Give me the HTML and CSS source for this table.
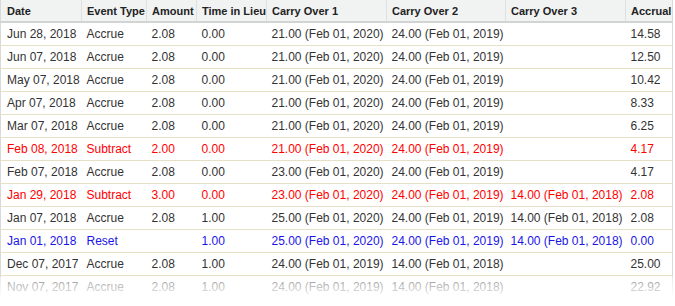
FILE: index.html
```html
<!DOCTYPE html>
<html lang="en">

<head>
    <meta charset="UTF-8">
    <meta name="viewport" content="width=device-width, initial-scale=1.0">
    <title>Leave History</title>
    <link rel="stylesheet" href="styles.css">
</head>

<body>
    <div class="grid-wrap">
        <table class="history">
            <colgroup>
                <col class="c-date">
                <col class="c-type">
                <col class="c-amount">
                <col class="c-lieu">
                <col class="c-carry">
                <col class="c-carry2">
                <col class="c-carry">
                <col>
            </colgroup>
            <thead>
                <tr>
                    <th>Date</th>
                    <th>Event Type</th>
                    <th>Amount</th>
                    <th>Time in Lieu</th>
                    <th>Carry Over 1</th>
                    <th>Carry Over 2</th>
                    <th>Carry Over 3</th>
                    <th>Accrual</th>
                </tr>
            </thead>
            <tbody>
                <tr>
                    <td>Jun 28, 2018</td><td>Accrue</td><td>2.08</td><td>0.00</td>
                    <td>21.00 (Feb 01, 2020)</td><td>24.00 (Feb 01, 2019)</td><td></td><td>14.58</td>
                </tr>
                <tr>
                    <td>Jun 07, 2018</td><td>Accrue</td><td>2.08</td><td>0.00</td>
                    <td>21.00 (Feb 01, 2020)</td><td>24.00 (Feb 01, 2019)</td><td></td><td>12.50</td>
                </tr>
                <tr>
                    <td>May 07, 2018</td><td>Accrue</td><td>2.08</td><td>0.00</td>
                    <td>21.00 (Feb 01, 2020)</td><td>24.00 (Feb 01, 2019)</td><td></td><td>10.42</td>
                </tr>
                <tr>
                    <td>Apr 07, 2018</td><td>Accrue</td><td>2.08</td><td>0.00</td>
                    <td>21.00 (Feb 01, 2020)</td><td>24.00 (Feb 01, 2019)</td><td></td><td>8.33</td>
                </tr>
                <tr>
                    <td>Mar 07, 2018</td><td>Accrue</td><td>2.08</td><td>0.00</td>
                    <td>21.00 (Feb 01, 2020)</td><td>24.00 (Feb 01, 2019)</td><td></td><td>6.25</td>
                </tr>
                <tr class="subtract">
                    <td>Feb 08, 2018</td><td>Subtract</td><td>2.00</td><td>0.00</td>
                    <td>21.00 (Feb 01, 2020)</td><td>24.00 (Feb 01, 2019)</td><td></td><td>4.17</td>
                </tr>
                <tr>
                    <td>Feb 07, 2018</td><td>Accrue</td><td>2.08</td><td>0.00</td>
                    <td>23.00 (Feb 01, 2020)</td><td>24.00 (Feb 01, 2019)</td><td></td><td>4.17</td>
                </tr>
                <tr class="subtract">
                    <td>Jan 29, 2018</td><td>Subtract</td><td>3.00</td><td>0.00</td>
                    <td>23.00 (Feb 01, 2020)</td><td>24.00 (Feb 01, 2019)</td><td>14.00 (Feb 01, 2018)</td><td>2.08</td>
                </tr>
                <tr>
                    <td>Jan 07, 2018</td><td>Accrue</td><td>2.08</td><td>1.00</td>
                    <td>25.00 (Feb 01, 2020)</td><td>24.00 (Feb 01, 2019)</td><td>14.00 (Feb 01, 2018)</td><td>2.08</td>
                </tr>
                <tr class="reset">
                    <td>Jan 01, 2018</td><td>Reset</td><td></td><td>1.00</td>
                    <td>25.00 (Feb 01, 2020)</td><td>24.00 (Feb 01, 2019)</td><td>14.00 (Feb 01, 2018)</td><td>0.00</td>
                </tr>
                <tr>
                    <td>Dec 07, 2017</td><td>Accrue</td><td>2.08</td><td>1.00</td>
                    <td>24.00 (Feb 01, 2019)</td><td>14.00 (Feb 01, 2018)</td><td></td><td>25.00</td>
                </tr>
                <tr>
                    <td>Nov 07, 2017</td><td>Accrue</td><td>2.08</td><td>1.00</td>
                    <td>24.00 (Feb 01, 2019)</td><td>14.00 (Feb 01, 2018)</td><td></td><td>22.92</td>
                </tr>
            </tbody>
        </table>
    </div>
</body>

</html>
```

FILE: styles.css
```css
body {
    margin: 0;
    padding: 0;
    font-family: 'Liberation Sans', Arial, sans-serif;
    background-color: #fff;
    overflow: hidden;
}

.grid-wrap {
    position: relative;
    width: 673px;
    height: 306px;
    overflow: hidden;
}

/* fade-out over the last visible row */
.grid-wrap::after {
    content: "";
    position: absolute;
    left: 0;
    right: 0;
    bottom: 0;
    height: 29px;
    background: linear-gradient(rgba(255, 255, 255, 0.45), rgba(255, 255, 255, 0.95) 70%, #fff);
}

.history {
    width: 673px;
    border-collapse: collapse;
    table-layout: fixed;
    border-left: 1px solid #d9d9d9;
    border-right: 1px solid #d9d9d9;
}

.c-date { width: 81px; }
.c-type { width: 65px; }
.c-amount { width: 50px; }
.c-lieu { width: 70px; }
.c-carry { width: 120px; }
.c-carry2 { width: 119px; }

th {
    height: 21px;
    padding: 0 5px;
    background-color: #f1f2f2;
    border-left: 1px solid #dfe1e1;
    border-bottom: 2px solid #d2d3d3;
    color: #222;
    font-size: 11px;
    font-weight: bold;
    text-align: left;
    white-space: nowrap;
}

th:first-child {
    border-left: none;
    padding-left: 6px;
}

td {
    height: 22px;
    padding: 0 5px;
    border-bottom: 1px solid #e6e1c6;
    color: #333;
    font-size: 12px;
    white-space: nowrap;
}

td:first-child {
    padding-left: 6px;
}

.subtract td {
    color: #f00;
}

.reset td {
    color: #1a14e6;
}
```
